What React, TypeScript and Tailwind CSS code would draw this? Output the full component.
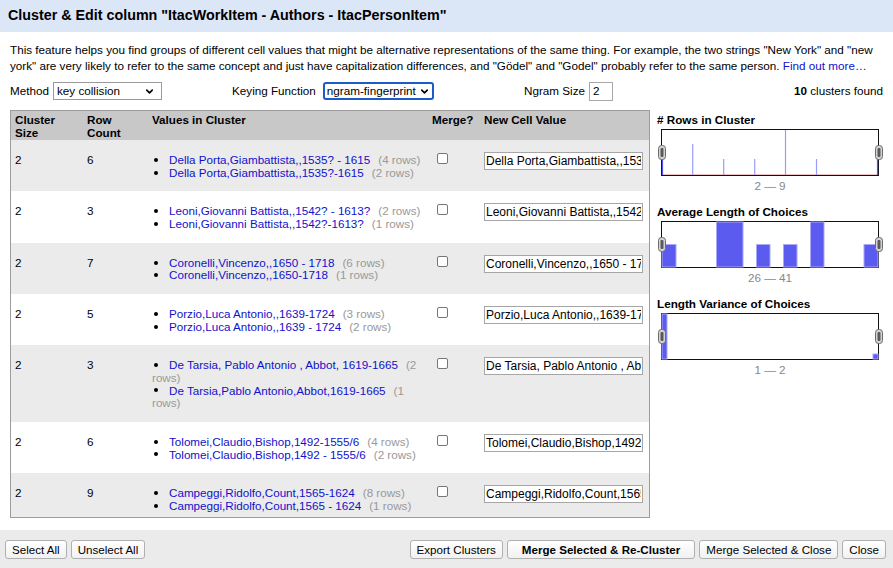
import { ChevronDown } from 'lucide-react';

type Cluster = {
  size: number;
  count: number;
  values: [string, number][];
};

const clusters: Cluster[] = [
  { size: 2, count: 6, values: [['Della Porta,Giambattista,,1535? - 1615', 4], ['Della Porta,Giambattista,,1535?-1615', 2]] },
  { size: 2, count: 3, values: [['Leoni,Giovanni Battista,,1542? - 1613?', 2], ['Leoni,Giovanni Battista,,1542?-1613?', 1]] },
  { size: 2, count: 7, values: [['Coronelli,Vincenzo,,1650 - 1718', 6], ['Coronelli,Vincenzo,,1650-1718', 1]] },
  { size: 2, count: 5, values: [['Porzio,Luca Antonio,,1639-1724', 3], ['Porzio,Luca Antonio,,1639 - 1724', 2]] },
  { size: 2, count: 3, values: [['De Tarsia, Pablo Antonio , Abbot, 1619-1665', 2], ['De Tarsia,Pablo Antonio,Abbot,1619-1665', 1]] },
  { size: 2, count: 6, values: [['Tolomei,Claudio,Bishop,1492-1555/6', 4], ['Tolomei,Claudio,Bishop,1492 - 1555/6', 2]] },
  { size: 2, count: 9, values: [['Campeggi,Ridolfo,Count,1565-1624', 8], ['Campeggi,Ridolfo,Count,1565 - 1624', 1]] },
];

const cols = 'grid grid-cols-[71px_65px_280px_52px_170px]';

function Handle({ x }: { x: number }) {
  return (
    <g>
      <rect x={x + 0.5} y={16.5} width={7} height={14} rx={3} fill="#d4d4d4" stroke="#6b6b6b" />
      <rect x={x + 2.5} y={19} width={3} height={9} rx={1} fill="#5a5a5a" />
    </g>
  );
}

function Histogram({ kind }: { kind: 'lines' | 'bars' | 'variance' }) {
  return (
    <svg width={226} height={47} className="block">
      <rect x={4.5} y={0.5} width={217} height={46} fill="white" stroke="#111" />
      {kind === 'lines' && (
        <g stroke="#9d9df6" strokeWidth={1.2}>
          <line x1={5} y1={45.5} x2={221} y2={45.5} stroke="#f2c4c4" />
          <line x1={5.5} y1={20} x2={5.5} y2={46} stroke="#5555ee" />
          <line x1={35.7} y1={15} x2={35.7} y2={46} />
          <line x1={66.7} y1={30} x2={66.7} y2={46} />
          <line x1={97.7} y1={30} x2={97.7} y2={46} />
          <line x1={128.5} y1={1} x2={128.5} y2={46} />
          <line x1={159.5} y1={30} x2={159.5} y2={46} />
          <line x1={220.5} y1={30} x2={220.5} y2={46} stroke="#5555ee" />
        </g>
      )}
      {kind === 'bars' && (
        <g fill="#5b5bf0" stroke="#a9a9f8" strokeWidth={1}>
          <rect x={5} y={23.5} width={14} height={22.5} />
          <rect x={59.5} y={1} width={26.5} height={45} />
          <rect x={99.5} y={23.5} width={13.5} height={22.5} />
          <rect x={126.5} y={23.5} width={13.5} height={22.5} />
          <rect x={153.5} y={1} width={13.5} height={45} />
          <rect x={207} y={23.5} width={14} height={22.5} />
        </g>
      )}
      {kind === 'variance' && (
        <g fill="#5b5bf0" stroke="#a9a9f8" strokeWidth={1}>
          <rect x={5} y={1} width={5} height={45} />
          <rect x={216} y={41} width={5} height={5} />
        </g>
      )}
      <Handle x={1} />
      <Handle x={218} />
    </svg>
  );
}

function Facet({ title, range, kind }: { title: string; range: string; kind: 'lines' | 'bars' | 'variance' }) {
  return (
    <div className="mb-[12px]">
      <div className="font-bold text-[11.7px] leading-[14px]">{title}</div>
      <div className="mt-[2px]">
        <Histogram kind={kind} />
      </div>
      <div className="mt-[3px] text-center text-[11.7px] leading-[14px] text-[#888]">{range}</div>
    </div>
  );
}

function Button({ children, bold }: { children: React.ReactNode; bold?: boolean }) {
  return (
    <button
      className={`h-[19px] rounded-[3px] border border-[#b0b0b0] bg-gradient-to-b from-white to-[#f1f1f1] text-[11.6px] leading-[17px] text-black ${
        bold ? 'px-[14px] font-bold' : 'px-[6px]'
      }`}
    >
      {children}
    </button>
  );
}

export default function App() {
  return (
    <div className="flex h-[568px] w-[893px] flex-col overflow-hidden bg-white font-['Liberation_Sans',Arial,sans-serif] text-black">
      <div className="flex h-[32px] shrink-0 items-center bg-[#dbe6f7] px-[8px]">
        <h1 className="text-[14.3px] font-bold">Cluster &amp; Edit column "ItacWorkItem - Authors - ItacPersonItem"</h1>
      </div>

      <p className="mt-[10px] px-[10px] text-[11.7px] leading-[16px]">
        This feature helps you find groups of different cell values that might be alternative representations of the
        same thing. For example, the two strings "New York" and "new york" are very likely to refer to the same concept
        and just have capitalization differences, and "Gödel" and "Godel" probably refer to the same person.{' '}
        <a className="text-[#1111cc]">Find out more…</a>
      </p>

      <div className="mt-[8px] flex h-[18px] items-center px-[10px] text-[11.7px]">
        <div className="flex w-[222px] items-center">
          <span>Method</span>
          <div className="ml-[4px] flex h-[18px] w-[109px] items-center justify-between border border-[#9a9a9a] bg-white pl-[3px] pr-[6px]">
            <span>key collision</span>
            <ChevronDown size={11} strokeWidth={3.5} />
          </div>
        </div>
        <div className="flex w-[292px] items-center">
          <span>Keying Function</span>
          <div className="ml-[7px] flex h-[18px] w-[111px] items-center justify-between rounded-[3px] border-2 border-[#1c5bc9] bg-white pl-[2px] pr-[2px]">
            <span>ngram-fingerprint</span>
            <ChevronDown size={11} strokeWidth={3.5} />
          </div>
        </div>
        <div className="flex flex-1 items-center">
          <span>Ngram Size</span>
          <div className="ml-[4px] flex h-[19px] w-[24px] items-center border border-[#a8a8a8] pl-[3px]">2</div>
        </div>
        <div>
          <b>10</b> clusters found
        </div>
      </div>

      <div className="mt-[10px] flex h-[408px] shrink-0 px-[10px]">
        <div className="h-[408px] w-[640px] overflow-hidden border border-[#9c9c9c] text-[11.65px] leading-[12.65px]">
          <div className={`${cols} h-[29px] bg-[#c8c8c8] pt-[3px] font-bold`}>
            <div className="pl-[4px]">
              Cluster
              <br />
              Size
            </div>
            <div className="pl-[5px]">
              Row
              <br />
              Count
            </div>
            <div className="pl-[5px]">Values in Cluster</div>
            <div className="pl-[5px]">Merge?</div>
            <div className="pl-[5px]">New Cell Value</div>
          </div>
          {clusters.map((c, i) => (
            <div key={i} className={`${cols} pb-[12px] pt-[14px] ${i % 2 === 0 ? 'bg-[#ebebeb]' : 'bg-white'}`}>
              <div className="pl-[4px]">{c.size}</div>
              <div className="pl-[5px]">{c.count}</div>
              <ul className="pl-[5px] pr-[3px]">
                {c.values.map(([v, n]) => (
                  <li key={v}>
                    <span className="mb-[2px] ml-[2px] mr-[11px] inline-block h-[4px] w-[4px] rounded-full bg-black align-middle" />
                    <a className="text-[#1111cc]">{v}</a>
                    <span className="ml-[8px] text-[#999]">({n} rows)</span>
                  </li>
                ))}
              </ul>
              <div className="pl-[10px]">
                <div className="-mt-[1px] h-[11px] w-[11px] rounded-[2px] border border-[#767676] bg-white" />
              </div>
              <div className="pl-[5px]">
                <input
                  readOnly
                  value={c.values[0][0]}
                  className="-mt-[2px] block h-[18px] w-[159px] border border-[#a6a6a6] bg-white px-[1px] text-[12px] outline-none"
                />
              </div>
            </div>
          ))}
        </div>

        <div className="ml-[7px] w-[226px] pt-[3px]">
          <Facet title="# Rows in Cluster" range="2 — 9" kind="lines" />
          <Facet title="Average Length of Choices" range="26 — 41" kind="bars" />
          <Facet title="Length Variance of Choices" range="1 — 2" kind="variance" />
        </div>
      </div>

      <div className="mt-auto flex h-[38px] shrink-0 items-center justify-between bg-[#ebebeb] pl-[5px] pr-[7px]">
        <div className="flex gap-[4px]">
          <Button>Select All</Button>
          <Button>Unselect All</Button>
        </div>
        <div className="flex gap-[4px]">
          <Button>Export Clusters</Button>
          <Button bold>Merge Selected &amp; Re-Cluster</Button>
          <Button>Merge Selected &amp; Close</Button>
          <Button>Close</Button>
        </div>
      </div>
    </div>
  );
}
